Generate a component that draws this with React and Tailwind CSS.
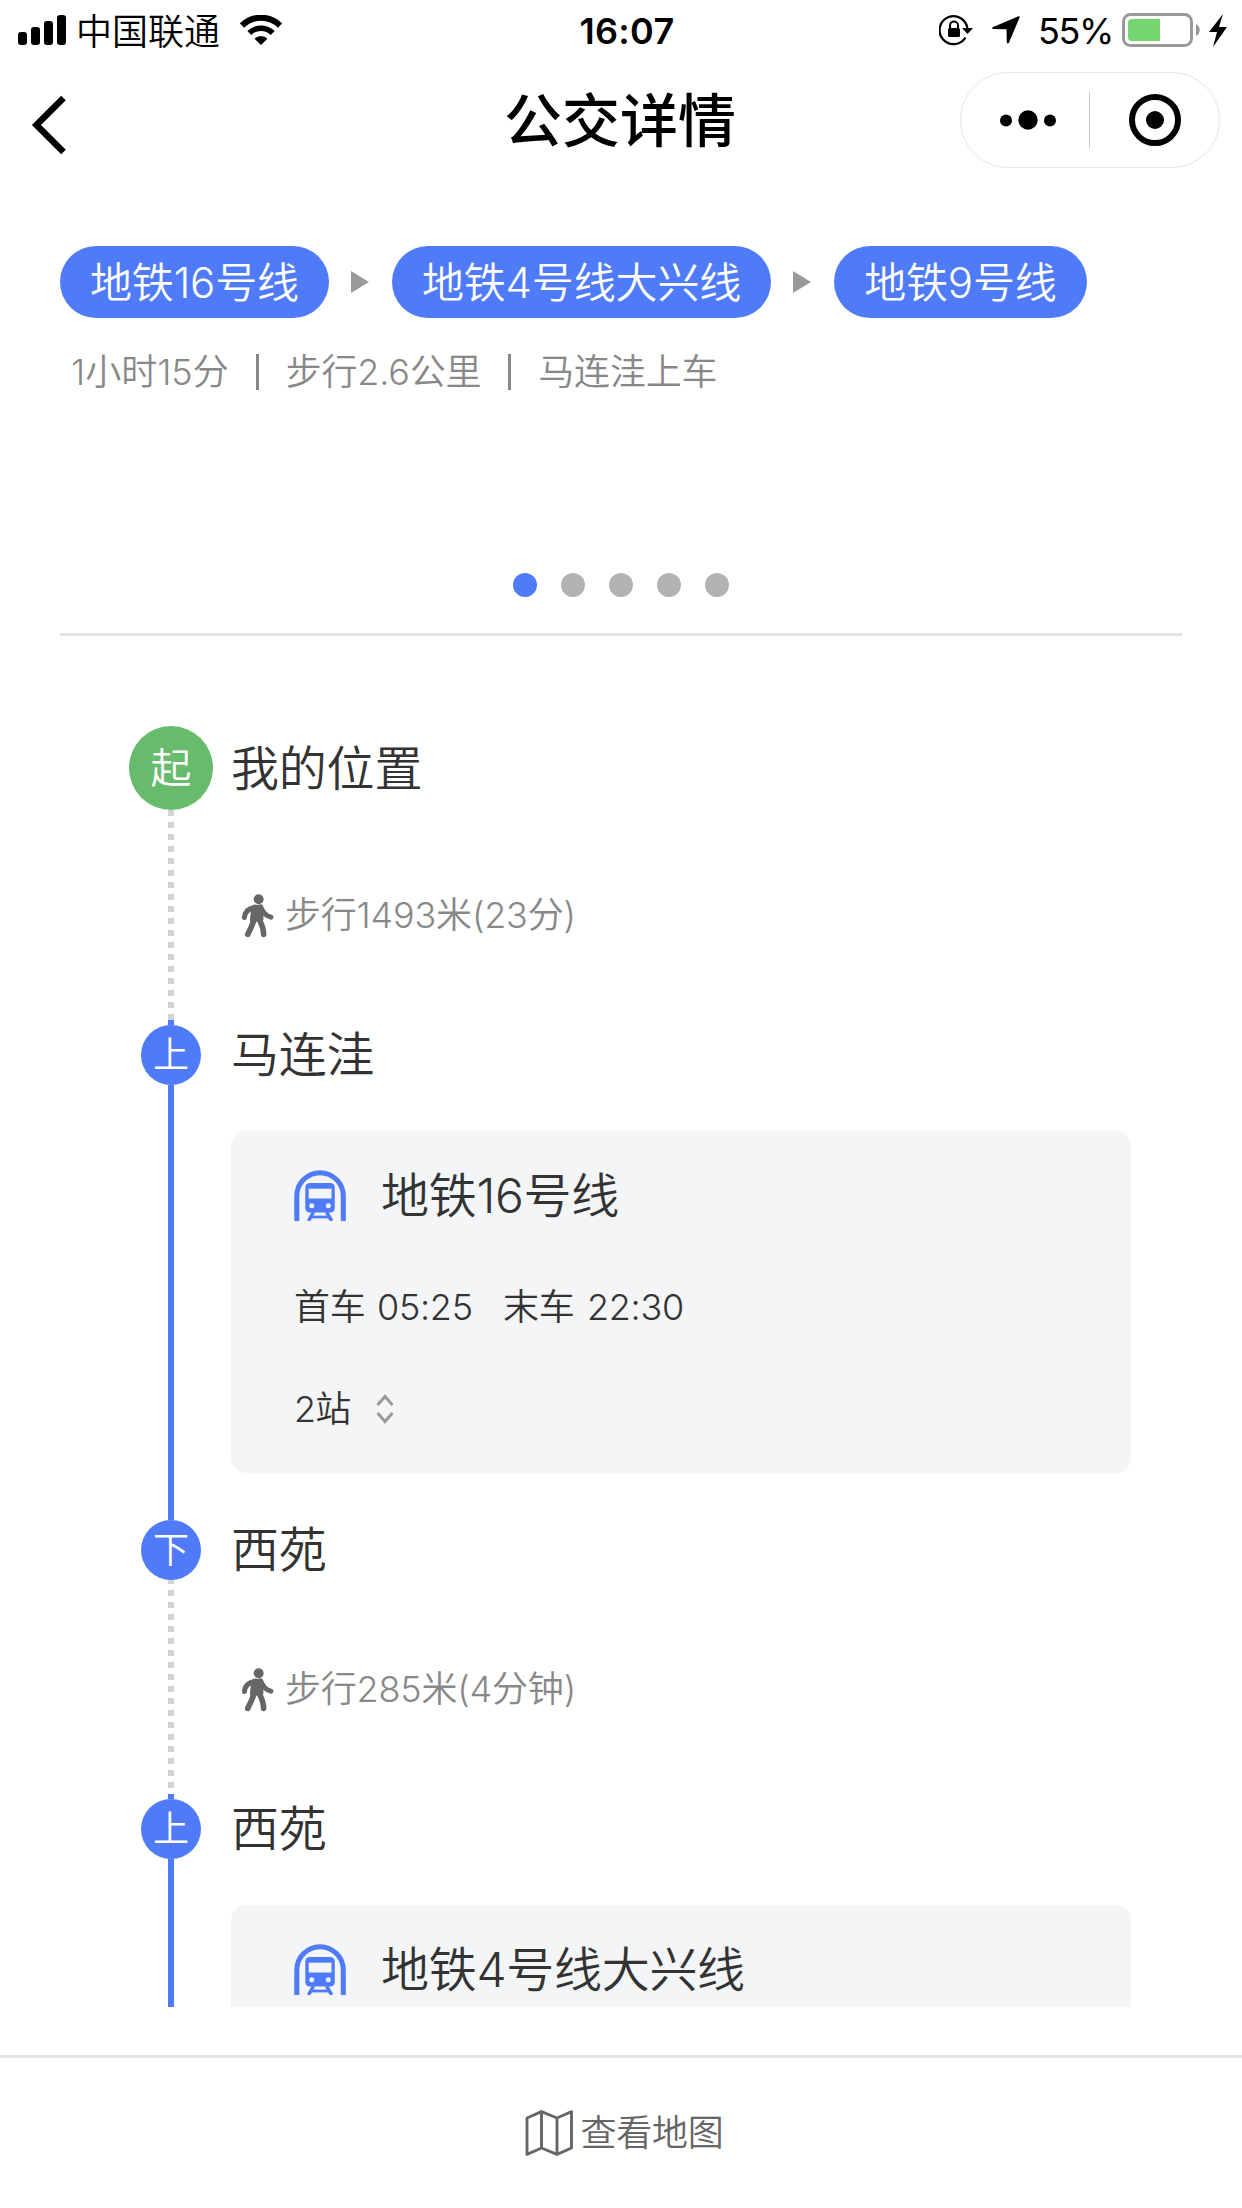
import React from 'react';

const lines = ['地铁16号线', '地铁4号线大兴线', '地铁9号线'];

const StatusBar = () => (
  <div className="h-[60px] pl-[18px] pr-[14px] flex items-center justify-between font-normal">
    <div className="flex items-center w-[405px]">
      <svg width="48" height="30" viewBox="0 0 48 30">
        <rect x="0" y="17" width="9" height="13" rx="3" />
        <rect x="13" y="12" width="9" height="18" rx="3" />
        <rect x="26" y="6" width="9" height="24" rx="3" />
        <rect x="39" y="0" width="9" height="30" rx="3" />
      </svg>
      <span className="ml-[10px] pt-[3px] text-[36px] leading-[60px] w-[145px] whitespace-nowrap font-[350]">中国联通</span>
      <svg className="ml-[19px]" width="42" height="30" viewBox="0 0 42 30">
        <path d="M2 10.500a27 27 0 0 1 38 0" fill="none" stroke="#000" strokeWidth="6" />
        <path d="M9.300 18a16.500 16.500 0 0 1 23.400 0" fill="none" stroke="#000" strokeWidth="5.500" />
        <path d="M21 30l-6.500-6.300a9 9 0 0 1 13 0z" />
      </svg>
    </div>
    <span className="pt-[2px] text-[36px] leading-[60px] font-semibold tracking-[0.3px]">16:07</span>
    <div className="flex items-center justify-end w-[397px]">
      <svg width="34" height="32" viewBox="0 0 34 32">
        <path d="M26.500 23.500A14 14 0 1 1 28.500 15" fill="none" stroke="#000" strokeWidth="2.300" />
        <path d="M23 14h11l-5.500 6z" />
        <rect x="9" y="14" width="12" height="9" rx="1.500" />
        <path d="M11 15v-3.500a4 4 0 0 1 8 0V15" fill="none" stroke="#000" strokeWidth="2" />
      </svg>
      <svg className="ml-[19px]" width="28" height="28" viewBox="0 0 28 28">
        <path d="M26.500.3c.9-.3 1.500.4 1.100 1.300L17 26.500c-.6 1.400-2.200 1.100-2.200-.4L14.500 13.300 1.500 13C0 13-.3 11.500 1.100 11z" />
      </svg>
      <span className="ml-[18px] pt-[2px] text-[36px] leading-[60px] w-[76px] tracking-[-1.4px] whitespace-nowrap">55%</span>
      <svg className="ml-[8px]" width="106" height="34" viewBox="0 0 106 34">
        <rect x="1.500" y="1.500" width="68" height="31" rx="7" fill="none" stroke="#999" strokeWidth="3" />
        <path d="M10 6h28v22H10a4 4 0 0 1-4-4V10a4 4 0 0 1 4-4z" fill="#76d672" />
        <path d="M74 11c5 2 5 10 0 12z" fill="#999" />
        <path d="M101 1L87 19h8l-4 15 14-20h-8z" />
      </svg>
    </div>
  </div>
);

const NavBar = () => (
  <div className="h-[120px] pl-[30px] pr-[22px] flex items-center justify-between">
    <div className="w-[250px]">
      <svg className="mt-[10px]" width="38" height="62" viewBox="0 0 38 62">
        <path d="M33.500 4L6.500 31l27 27" fill="none" stroke="#000" strokeWidth="6.500" />
      </svg>
    </div>
    <h1 className="pt-[3px] text-[58px] leading-[117px] font-medium">公交详情</h1>
    <div className="w-[260px] h-[96px] border border-[#e6e6e6] rounded-full flex items-center">
      <svg width="128" height="56" viewBox="0 0 128 56">
        <circle cx="45" cy="28.500" r="6" />
        <circle cx="67" cy="28" r="9.700" />
        <circle cx="89" cy="28.500" r="6" />
      </svg>
      <div className="w-px h-[56px] bg-[#ccc]" />
      <svg width="129" height="56" viewBox="0 0 129 56">
        <circle cx="65" cy="28" r="23" fill="none" stroke="#000" strokeWidth="6" />
        <circle cx="65" cy="28" r="9" />
      </svg>
    </div>
  </div>
);

const WalkIcon = () => (
  <svg width="34" height="45" viewBox="395 576 102 136" fill="#666" stroke="#666" strokeLinecap="round" strokeLinejoin="round">
    <circle cx="448" cy="595" r="15" stroke="none" />
    <path d="M434 617L455 617 457 655 427 658 430 630z" strokeWidth="11" />
    <path d="M438 619Q407 624 405 650M454 618Q464 644 485 649" fill="none" strokeWidth="15" />
    <path d="M435 655Q426 680 415 701M449 655Q463 680 463 701" fill="none" strokeWidth="17" />
  </svg>
);

const MetroIcon = () => (
  <svg width="52" height="51" viewBox="0 0 52 51" fill="none" stroke="#507bf8">
    <path d="M2.800 51V26a23.200 23.200 0 0 1 46.500 0V51" strokeWidth="5" />
    <rect x="11.300" y="13" width="29.500" height="29.500" rx="4.500" fill="#507bf8" stroke="none" />
    <rect x="14.700" y="18.700" width="22.800" height="9.800" fill="#f4f5f7" stroke="none" />
    <circle cx="17.800" cy="35.700" r="2.500" fill="#f4f5f7" stroke="none" />
    <circle cx="34.300" cy="35.700" r="2.500" fill="#f4f5f7" stroke="none" />
    <path d="M19.500 42L14.500 51M32.500 42L37.700 51" strokeWidth="3.500" />
    <path d="M17 47h18" strokeWidth="2.800" />
  </svg>
);

const Badge = ({ text }) => (
  <div className="relative w-[60px] h-[60px] shrink-0 rounded-full bg-[#507bf8] text-white text-[36px] leading-[61px] text-center">
    {text}
  </div>
);

const Dotted = ({ className = '' }) => (
  <div className={`w-[6px] flex-1 bg-[repeating-linear-gradient(to_bottom,#d3d3d3_0px,#d3d3d3_6px,transparent_6px,transparent_12px)] ${className}`} />
);

const Walk = ({ children }) => (
  <div className="flex items-center pl-[10px] text-[36px] leading-[60px] tracking-[-0.2px] text-[#888]">
    <WalkIcon />
    <span className="ml-[10px] whitespace-nowrap">{children}</span>
  </div>
);

const LineCard = ({ name, first, last, stops }) => (
  <div className="w-[900px] h-[342px] mt-[46px] pl-[63px] rounded-[15px] bg-[#f4f5f7] text-[#333]">
    <div className="pt-[28px] flex items-center">
      <MetroIcon />
      <span className="ml-[35px] pt-[2px] text-[48px] leading-[70px] tracking-[-0.3px]">{name}</span>
    </div>
    {first && (
      <div className="mt-[46px] flex text-[36px] leading-[60px] whitespace-nowrap tracking-[-0.3px]">
        <span className="w-[83px]">首车</span>
        <span className="w-[126px]">{first}</span>
        <span className="w-[84px]">末车</span>
        <span>{last}</span>
      </div>
    )}
    {stops && (
      <div className="mt-[42px] flex items-center text-[36px] leading-[60px]">
        <span className="w-[82px] tracking-[-0.8px]">{stops}站</span>
        <svg width="18" height="30" viewBox="0 0 18 30" fill="none" stroke="#999" strokeWidth="3">
          <path d="M1.500 11L9 2.500l7.500 8.500M1.500 19L9 27.500l7.500-8.500" />
        </svg>
      </div>
    )}
  </div>
);

export default function App() {
  return (
    <div className="w-[1242px] h-[2208px] overflow-hidden bg-white text-black font-['Inter','Noto_Sans_CJK_SC',sans-serif] font-[350] flex flex-col">
      <StatusBar />
      <NavBar />

      {/* Route summary */}
      <div className="mx-[60px] h-[456px] border-b-[3px] border-[#e3e3e3] pt-[66px] flex flex-col">
        <div className="flex items-center">
          {lines.map((line, i) => (
            <React.Fragment key={line}>
              {i > 0 && (
                <svg className="mx-[21px]" width="21" height="22" viewBox="0 0 21 22">
                  <path d="M1 0l18 11L1 22z" fill="#9a9a9a" />
                </svg>
              )}
              <div className="h-[72px] px-[30px] rounded-full bg-[#507bf8] text-white text-[42px] leading-[74px] tracking-[-0.15px] whitespace-nowrap">
                {line}
              </div>
            </React.Fragment>
          ))}
        </div>
        <div className="mt-[23px] pl-[11px] flex items-center gap-[27px] text-[36px] leading-[60px] text-[#888] whitespace-nowrap">
          <span className="pt-px">1小时15分</span>
          <div className="w-[3px] h-[36px] bg-[#888]" />
          <span className="pt-px tracking-[-0.2px]">步行2.6公里</span>
          <div className="w-[3px] h-[36px] bg-[#888]" />
          <span className="pt-px tracking-[-0.2px]">马连洼上车</span>
        </div>
        <div className="mt-auto mb-[36px] flex justify-center gap-[24px]">
          <i className="w-[24px] h-[24px] rounded-full bg-[#507bf8]" />
          {[1, 2, 3, 4].map((n) => (
            <i key={n} className="w-[24px] h-[24px] rounded-full bg-[#b2b2b2]" />
          ))}
        </div>
      </div>

      {/* Timeline */}
      <div className="h-[1371px] pt-[90px] pl-[129px] overflow-hidden text-[48px] leading-[60px] text-[#333]">
        <div className="h-[294px] flex gap-[18px]">
          <div className="w-[84px] flex flex-col items-center">
            <div className="w-[84px] h-[84px] shrink-0 rounded-full bg-[#67bb6d] text-white text-[41px] leading-[85px] text-center">起</div>
            <Dotted />
          </div>
          <div>
            <div className="pt-[2px] leading-[82px] tracking-[-0.2px]">我的位置</div>
            <div className="mt-[75px]"><Walk>步行1493米(23分)</Walk></div>
          </div>
        </div>

        <div className="h-[500px] flex gap-[18px]">
          <div className="w-[84px] flex flex-col items-center">
            <div className="w-[6px] h-[5px] bg-[#507bf8]" />
            <Badge text="上" />
            <div className="w-[6px] flex-1 bg-[#507bf8]" />
          </div>
          <div className="pt-[5px]">
            <div className="tracking-[-0.3px]">马连洼</div>
            <LineCard name="地铁16号线" first="05:25" last="22:30" stops={2} />
          </div>
        </div>

        <div className="h-[274px] flex gap-[18px]">
          <div className="w-[84px] flex flex-col items-center">
            <Badge text="下" />
            <Dotted className="-mt-[2px]" />
          </div>
          <div>
            <div className="tracking-[-0.3px]">西苑</div>
            <div className="mt-[79px]"><Walk>步行285米(4分钟)</Walk></div>
          </div>
        </div>

        <div className="h-[500px] flex gap-[18px]">
          <div className="w-[84px] flex flex-col items-center">
            <div className="w-[6px] h-[5px] bg-[#507bf8]" />
            <Badge text="上" />
            <div className="w-[6px] flex-1 bg-[#507bf8]" />
          </div>
          <div className="pt-[5px]">
            <div className="tracking-[-0.3px]">西苑</div>
            <LineCard name="地铁4号线大兴线" />
          </div>
        </div>
      </div>

      {/* Bottom button */}
      <div className="mt-[48px] h-[153px] border-t-[3px] border-[#e3e3e3] pl-[7px] flex items-center justify-center text-[36px] leading-[60px] text-[#666]">
        <svg width="48" height="46" viewBox="0 0 48 46" fill="none" stroke="#666" strokeWidth="2.900" strokeLinejoin="round">
          <path d="M2 8L16.500 1.700 32 8l14.500-6.300V38L32 44.300 16.500 38 2 44.300zM16.500 2v36M32 8v36" />
        </svg>
        <span className="ml-[7px] tracking-[-0.2px]">查看地图</span>
      </div>
    </div>
  );
}
